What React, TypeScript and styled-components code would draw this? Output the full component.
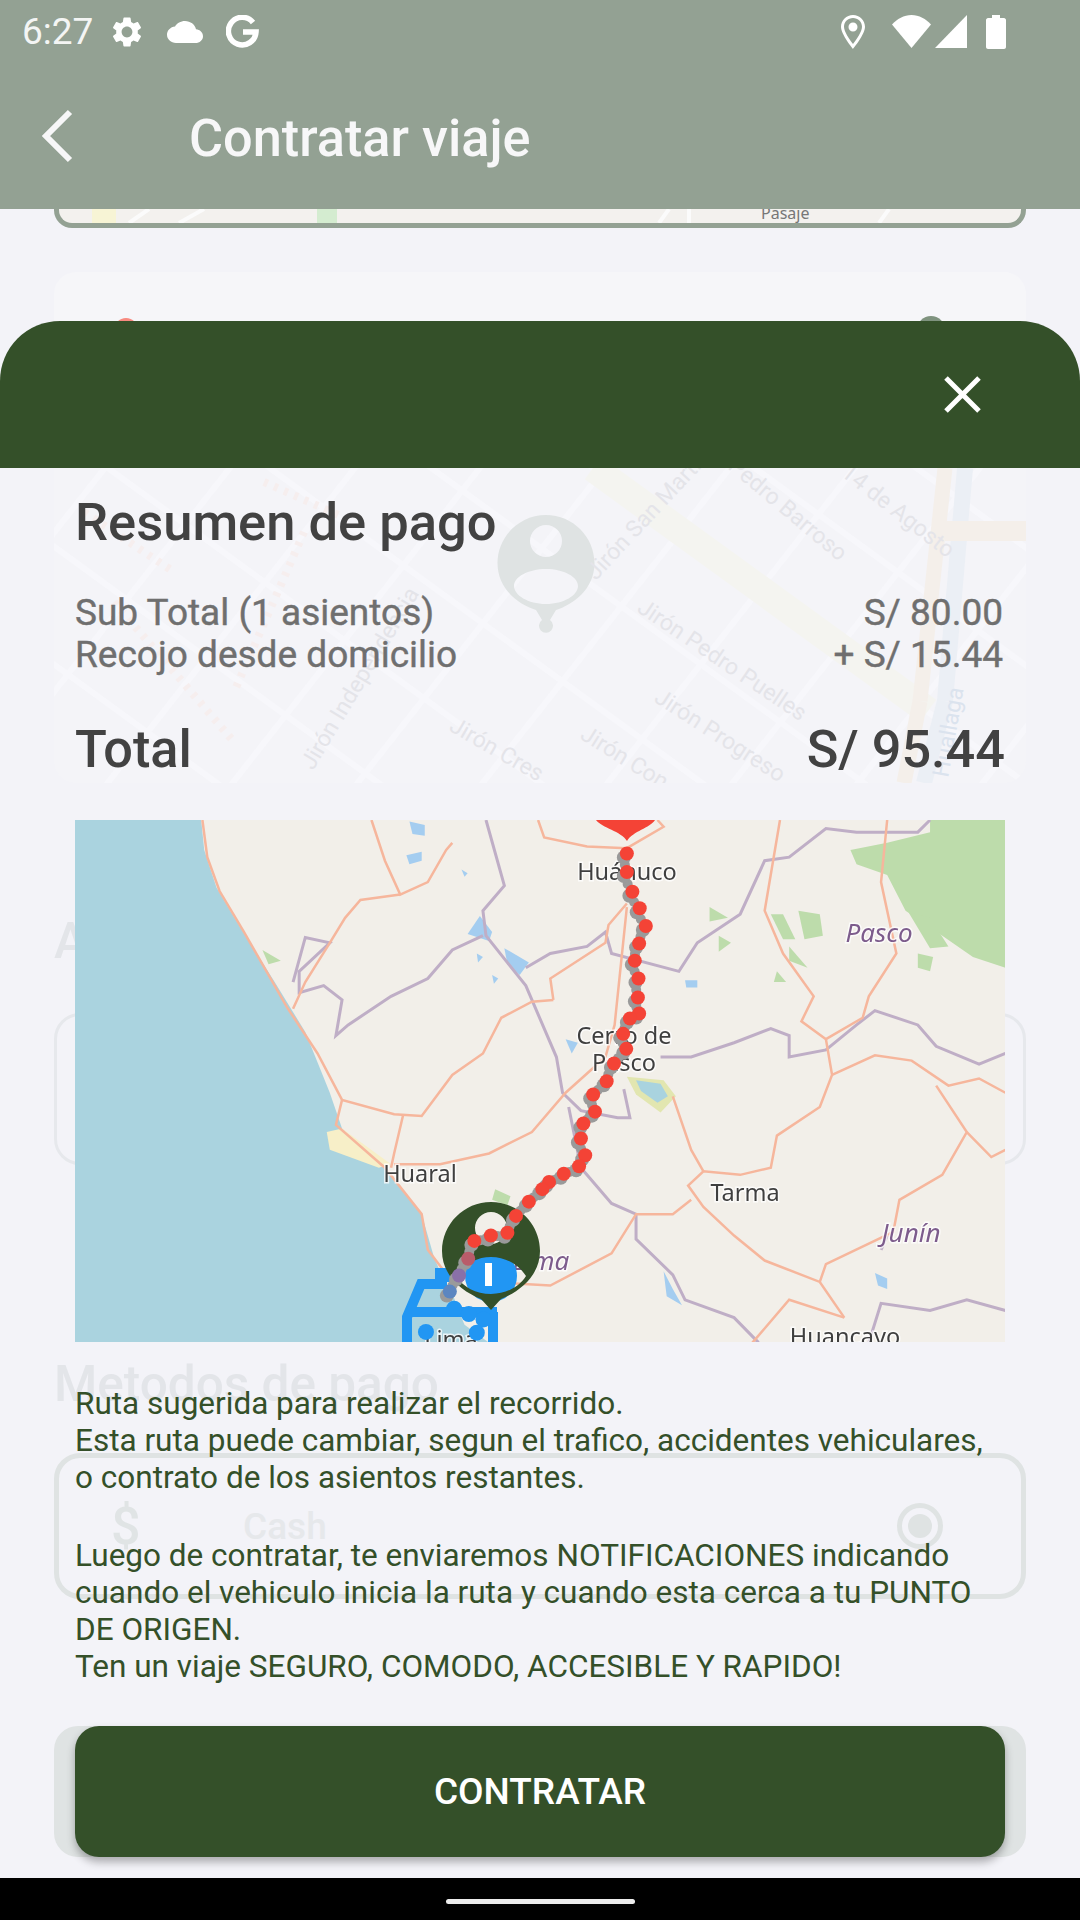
import React from "react";
import styled, { createGlobalStyle } from "styled-components";

const Global = createGlobalStyle`
  html, body { margin: 0; padding: 0; background: #f3f3f8; }
  * { box-sizing: border-box; }
  body { font-family: Roboto, "Liberation Sans", sans-serif; }
`;

const Screen = styled.div`
  position: relative;
  width: 1080px;
  height: 1920px;
  overflow: hidden;
  display: flex;
  flex-direction: column;
  background: #f3f3f8;
`;

const Header = styled.header`
  flex: 0 0 209px;
  background: #93a193;
  display: flex;
  flex-direction: column;
  color: #f7f7f8;
`;

const StatusBar = styled.div`
  height: 63px;
  display: flex;
  align-items: center;
  justify-content: space-between;
  padding: 0 74px 0 22px;
`;

const StatusGroup = styled.div`
  display: flex;
  align-items: center;
`;

const Clock = styled.span`
  font-size: 37px;
  font-weight: 400;
  line-height: 43px;
  width: 87px;
  color: #f4f5f4;
`;

const StatusIcon = styled.svg<{ $gap?: number }>`
  display: block;
  flex: none;
  margin-left: ${(p) => p.$gap ?? 0}px;
  fill: #fff;
`;

const Toolbar = styled.div`
  flex: 1;
  display: flex;
  align-items: center;
  padding: 0 0 0 41px;
`;

const BackIcon = styled.svg`
  flex: none;
  stroke: #f7f7f8;
  fill: none;
  stroke-width: 6;
`;

const Title = styled.h1`
  margin: 6px 0 0 116px;
  font-size: 52.25px;
  line-height: 60px;
  font-weight: 500;
  color: #f7f7f8;
`;

const Backdrop = styled.div`
  flex: 1;
  display: flex;
  flex-direction: column;
  padding: 0 54px;
`;

const MapCardTail = styled.div`
  height: 19px;
  border: 5px solid #93a193;
  border-top: 0;
  border-radius: 0 0 18px 18px;
  background: #f3f1ee;
  overflow: hidden;
`;

const RouteCard = styled.div`
  margin-top: 44px;
  height: 511px;
  border-radius: 22px;
  overflow: hidden;
  background: #f4f4f8;
`;

const FadedHeading = styled.h2<{ $top: number }>`
  margin: ${(p) => p.$top}px 0 0;
  font-size: 49.5px;
  line-height: 58px;
  font-weight: 500;
  color: #e3e5e9;
`;

const OptionCard = styled.div<{ $top: number; $height: number; $line: number; $color: string }>`
  margin-top: ${(p) => p.$top}px;
  height: ${(p) => p.$height}px;
  border: ${(p) => p.$line}px solid ${(p) => p.$color};
  border-radius: 26px;
  display: flex;
  align-items: center;
  padding: 0 78px 0 52px;
`;

const CashSign = styled.span`
  width: 132px;
  font-size: 52px;
  font-weight: 500;
  color: #e0e4e5;
`;

const CashLabel = styled.span`
  flex: 1;
  font-size: 37px;
  font-weight: 500;
  color: #e6e8eb;
`;

const RadioOuter = styled.span`
  width: 46px;
  height: 46px;
  border-radius: 50%;
  border: 5px solid #dfe3e3;
  display: flex;
  align-items: center;
  justify-content: center;
`;

const RadioDot = styled.span`
  width: 24px;
  height: 24px;
  border-radius: 50%;
  background: #dfe3e3;
`;

const ActionBacking = styled.div`
  margin-top: 127px;
  height: 131px;
  border-radius: 24px;
  background: #dfe3e3;
`;

const NavBar = styled.div`
  flex: 0 0 42px;
  background: #000;
  display: flex;
  align-items: flex-start;
  justify-content: center;
  padding-top: 21px;
`;

const HomePill = styled.span`
  width: 189px;
  height: 5px;
  border-radius: 3px;
  background: #ececec;
`;

const Sheet = styled.section`
  position: absolute;
  left: 0;
  right: 0;
  top: 321px;
  bottom: 42px;
  display: flex;
  flex-direction: column;
`;

const SheetHeader = styled.div`
  flex: 0 0 147px;
  background: #345029;
  border-radius: 60px 60px 0 0;
  display: flex;
  justify-content: flex-end;
  padding: 55px 99px 0 0;
`;

const CloseIcon = styled.svg`
  stroke: #fff;
  stroke-width: 5;
  fill: none;
`;

const SheetBody = styled.div`
  flex: 1;
  padding: 24px 75px 0;
  display: flex;
  flex-direction: column;
`;

const SummaryTitle = styled.h2`
  margin: 0;
  font-size: 52.5px;
  line-height: 60px;
  font-weight: 500;
  color: #424242;
`;

const Rows = styled.div`
  margin-top: 40px;
`;

const Row = styled.div`
  display: flex;
  justify-content: space-between;
  padding-right: 2px;
  font-size: 37px;
  line-height: 42px;
  font-weight: 400;
  color: #6f6f6f;
  -webkit-text-stroke: 0.4px #6f6f6f;
`;

const TotalRow = styled.div`
  margin-top: 44px;
  display: flex;
  justify-content: space-between;
  font-size: 52.25px;
  line-height: 60px;
  font-weight: 500;
  color: #424242;
`;

const RouteMap = styled.svg`
  display: block;
  margin-top: 40px;
  flex: none;
  background: #f2efe9;
`;

const BaseLayer = styled.g`
  filter: blur(0.6px);
`;

const Notes = styled.div`
  margin-top: 43px;
  height: 296px;
  font-size: 31.5px;
  line-height: 37px;
  font-weight: 400;
  color: #345029;
`;

const NoteParagraph = styled.p<{ $top?: number }>`
  margin: ${(p) => p.$top ?? 0}px 0 0;
`;

const ContractButton = styled.button`
  margin-top: 45px;
  height: 131px;
  border: 0;
  border-radius: 24px;
  background: #345029;
  color: #fff;
  font-family: inherit;
  font-size: 37px;
  font-weight: 500;
  box-shadow: 0 5px 8px rgba(0, 0, 0, 0.3);
`;

const MapLabel = styled.text<{ $italic?: boolean }>`
  font-family: "Noto Sans", "Open Sans", sans-serif;
  font-size: ${(p) => (p.$italic ? 26 : 23.5)}px;
  font-style: ${(p) => (p.$italic ? "italic" : "normal")};
  fill: ${(p) => (p.$italic ? "#7d5c8c" : "#3f3f3f")};
  stroke: rgba(255, 255, 255, 0.75);
  stroke-width: 3px;
  paint-order: stroke;
  text-anchor: middle;
`;

const GhostLabel = styled.text<{ $blue?: boolean }>`
  font-family: Roboto, sans-serif;
  font-size: 23px;
  fill: ${(p) => (p.$blue ? "#dbe3ee" : "#e4e4e9")};
`;

const TailLabel = styled.text`
  font-family: "Noto Sans", sans-serif;
  font-size: 16px;
  fill: #777;
`;

const ROADS = [
  "M232 26L240 130 260 225 300 340 370 550 420 680 460 810 545 850 590 855 640 740 690 680 720 580 770 535 805 530",
  "M460 810L450 880 530 1000 590 1130 600 1230 640 1320",
  "M560 850L545 960 540 1000",
  "M545 990L620 990 700 960 770 900 825 790 890 690 905 600 925 270",
  "M925 260L895 320 890 370 800 470 805 530",
  "M508 26L530 140 555 235 600 200 630 110 640 90",
  "M555 235L490 250 465 300 440 370 400 480 380 555",
  "M780 26L790 75 860 100 925 105 985 45 975 26",
  "M1175 26L1150 280 1180 400 1230 520 1210 590 1250 640 1260 740 1240 830 1170 910 1160 1000 1110 1020 1050 1010 1025 1050 1050 1110 1100 1190 1150 1260 1240 1320 1280 1420",
  "M1350 26L1340 200 1365 400 1320 520 1310 580 1250 640",
  "M1260 740L1330 685 1390 700 1450 770 1500 750 1543 790",
  "M1430 770L1480 900 1440 1020 1370 1090 1360 1180 1250 1270 1240 1320",
  "M1480 900L1520 970 1543 950",
  "M1000 800L1030 950 1050 1010",
  "M700 1320L800 1330 900 1240 940 1130 1000 1130 1030 1090",
  "M1280 1420L1190 1370 1130 1490",
];

const BORDERS = [
  "M695 26L725 210 690 280 695 350 760 490 810 690 820 790 850 840 910 860 930 860 920 780",
  "M690 350L640 390 600 470 540 520 470 600 450 630 460 530 430 490 390 510 390 450 440 370 400 355 380 480",
  "M760 440L800 400 860 380 890 340 900 400 1010 450 1040 370 1110 290 1150 140 1190 130 1250 50 1300 60 1400 60 1420 26",
  "M980 690L1030 690 1100 650 1160 610 1190 630 1190 690 1250 670 1300 600 1330 560 1400 600 1430 660 1500 710 1543 680",
  "M830 830L850 1000 900 1100 940 1130 940 1200 1000 1300 1020 1370 1100 1420 1140 1490",
  "M1320 1490L1340 1380 1420 1400 1480 1370 1543 1400",
  "M1340 1230L1350 1190",
];

const GREENS = [
  "M1420 26H1543V440L1490 410 1440 350 1380 280 1350 180 1300 150 1290 110 1350 90 1420 60Z",
  "M1205 280L1240 290 1245 350 1215 360Z",
  "M1385 285L1420 300 1450 380 1420 385Z",
  "M1160 290L1180 290 1200 360 1180 360Z",
  "M1060 270L1090 300 1060 310Z",
  "M1190 380L1220 440 1190 420Z",
  "M1075 350L1095 370 1075 395Z",
  "M1170 450L1185 480 1165 480Z",
  "M1400 400L1425 410 1420 450 1400 440Z",
  "M330 390L360 420 340 430Z",
  "M710 1060L735 1080 730 1105 705 1090Z",
];

const WATERS = [
  "M570 30L595 40 595 70 575 65Z",
  "M565 125L590 115 590 140 570 150Z",
  "M655 165L665 175 660 185Z",
  "M685 295L705 340 700 365 665 345Z",
  "M725 385L765 425 750 460 730 430Z",
  "M680 400L690 410 682 425Z",
  "M705 460L715 470 708 485Z",
  "M1020 475L1040 475 1040 495 1022 495Z",
  "M825 640L845 650 835 680Z",
  "M985 1290L1000 1340 1015 1385 990 1360Z",
  "M1330 1295L1350 1310 1350 1340 1335 1330Z",
];

const zoomX = (z: number) => (z - 24) * 0.6125;
const zoomY = (z: number) => (z - 26) * 0.357;

const RED: [number, number, string?][] = [
  [925, 120], [925, 172], [934, 227], [946, 273], [956, 323], [945, 372], [938, 420], [944, 470],
  [943, 523], [945, 568], [930, 582], [919, 625], [924, 667], [904, 708], [892, 758], [870, 795],
  [873, 843], [854, 876], [850, 918], [857, 965], [847, 996], [822, 1017], [798, 1040], [787, 1060],
  [765, 1095], [744, 1135], [730, 1182], [703, 1190], [676, 1205], [666, 1255, "#b95c6a"],
  [651, 1302, "#8a70a8"], [636, 1347, "#5c86c0"], [643, 1395, "#2196f3"], [667, 1410, "#2196f3"],
  [691, 1425, "#2196f3"], [680, 1462, "#2196f3"], [597, 1460, "#2196f3"],
];

const GREY_COUNT = 32;

function SouthMap() {
  const grey = RED.slice(0, GREY_COUNT);
  return (
    <RouteMap width={930} height={522} viewBox="0 0 930 522">
      <BaseLayer>
        <g transform="scale(.6125 .357) translate(-24 -26)">
          <path fill="#aad3df" d="M24 26H230L235 110 255 215 295 330 350 480 400 620 440 790 460 890 530 1000 590 1130 610 1250 625 1310 640 1350 650 1400 660 1440 700 1490 24 1490Z" />
          <path fill="#f7efc8" d="M435 900L460 890 540 990 520 1000 440 950Z" />
          {GREENS.map((d) => (
            <path key={d} d={d} fill="#bddcab" />
          ))}
          {WATERS.map((d) => (
            <path key={d} d={d} fill="#a4cdf0" />
          ))}
          <path d="M925 745L985 755 1005 800 980 845 940 795Z" fill="#e2e6b0" />
          <path d="M940 755L980 765 992 800 975 818 948 785Z" fill="#a9d3df" />
          {BORDERS.map((d) => (
            <path key={d} d={d} fill="none" stroke="#bfaec6" strokeWidth="3" vectorEffect="non-scaling-stroke" />
          ))}
          {ROADS.map((d) => (
            <path key={d} d={d} fill="none" stroke="#f6b69c" strokeWidth="2.5" vectorEffect="non-scaling-stroke" />
          ))}
        </g>
        <MapLabel x={552} y={60}>Huánuco</MapLabel>
        <MapLabel x={549} y={224}>Cerro de</MapLabel>
        <MapLabel x={549} y={251}>Pasco</MapLabel>
        <MapLabel x={345} y={362}>Huaral</MapLabel>
        <MapLabel x={670} y={381}>Tarma</MapLabel>
        <MapLabel x={770} y={525}>Huancayo</MapLabel>
        <MapLabel x={376} y={528}>Lima</MapLabel>
        <MapLabel x={804} y={122} $italic>Pasco</MapLabel>
        <MapLabel x={836} y={422} $italic>Junín</MapLabel>
        <MapLabel x={466} y={450} $italic>Lima</MapLabel>
      </BaseLayer>

      <path fill="#f44336" d="M521 0H580C575 8 558 11 552 21C546 11 527 8 521 0Z" />

      <g fill="none" stroke="#2196f3" strokeWidth="10">
        <path d="M332 524V497L346 464H372" />
        <path d="M332 492H422" />
        <path d="M418 524V492" />
      </g>
      <path fill="#2196f3" d="M360 448H375V462H360Z" />
      <circle cx={416} cy={456} r={26} fill="#2196f3" />
      <path fill="#fff" d="M410 443H417V466H410Z" />
      <path
        fillRule="evenodd"
        fill="#345029"
        d="M416 382C443 382 465 404 465 431C465 456 444 472 426 479L416 490L406 479C388 472 367 456 367 431C367 404 389 382 416 382ZM416 392A16 16 0 1 0 416 424A16 16 0 1 0 416 392ZM416 437C401 437 388 445 381 456C388 467 401 474 416 474C431 474 444 467 451 456C444 445 431 437 416 437Z"
      />
      {grey.slice(1).map(([x, y], i) => (
        <circle
          key={`mid-${x}-${y}`}
          cx={(zoomX(x) + zoomX(grey[i][0])) / 2 - 2}
          cy={(zoomY(y) + zoomY(grey[i][1])) / 2 + 2}
          r={5}
          fill="#9a9a9a"
        />
      ))}
      {grey.map(([x, y]) => (
        <circle key={`grey-${x}-${y}`} cx={zoomX(x) - 3} cy={zoomY(y) + 4} r={7} fill="#9a9a9a" />
      ))}
      {RED.map(([x, y, color]) => (
        <circle key={`dot-${x}-${y}`} cx={zoomX(x)} cy={zoomY(y)} r={color === "#2196f3" ? 8 : 7} fill={color ?? "#f44336"} />
      ))}
    </RouteMap>
  );
}

const ALONG = [-5, -4, -3, -2, -1, 0, 1, 2, 3, 4, 5, 6, 7].map((k) => [539 - k * 56, 196 + k * 77]);
const ACROSS = [-2, -1, 0, 1, 2, 3, 4, 5, 6, 7, 8, 9].map((k) => [k * 125, 420]);

function GhostMap() {
  return (
    <svg width={972} height={511} viewBox="0 0 972 511" style={{ display: "block" }}>
      {ALONG.map(([x, y]) => (
        <line key={`a-${x}`} x1={x - 810} y1={y - 590} x2={x + 810} y2={y + 590} stroke="#f7f7fb" strokeWidth={6} />
      ))}
      {ACROSS.map(([x, y]) => (
        <line key={`b-${x}`} x1={x - 620} y1={y + 790} x2={x + 620} y2={y - 790} stroke="#f7f7fb" strokeWidth={6} />
      ))}
      <path d="M539 196L874 439" stroke="#f4f4f0" strokeWidth={28} />
      <path d="M891 196L866 429" stroke="#f4efea" strokeWidth={15} />
      <path d="M911 196L891 429" stroke="#ebeff5" strokeWidth={16} />
      <path d="M891 259H972" stroke="#f4efea" strokeWidth={20} />
      <path d="M866 429L850 511" stroke="#f4efea" strokeWidth={15} />
      <path d="M891 429L870 511" stroke="#ebeff5" strokeWidth={16} />
      <path d="M30 240L120 300M60 330L180 470M210 210L300 250M250 260L180 420" stroke="#f6eeee" strokeWidth={8} strokeDasharray="4 7" fill="none" />
      <rect x={0} y={0} width={972} height={49} fill="#f6f6f9" />
      <circle cx={72} cy={58} r={12} fill="#f88a80" />
      <circle cx={877} cy={58} r={14} fill="#7f937f" />
      <path
        fillRule="evenodd"
        fill="#dfe3e3"
        d="M492 243C519 243 540.5 265 540.5 291C540.5 318 518 333 502 338L496 348A7 7 0 1 1 488 348L482 338C466 333 443.5 318 443.5 291C443.5 265 465 243 492 243ZM492 253A16 16 0 1 0 492 285A16 16 0 1 0 492 253ZM492 297C474 297 460 305 460 314C460 323 474 332 492 332C510 332 524 323 524 314C524 305 510 297 492 297Z"
      />
      <GhostLabel transform="translate(542 309) rotate(-47)">Jirón San Martín</GhostLabel>
      <GhostLabel transform="translate(673 196) rotate(40)">Pedro Barroso</GhostLabel>
      <GhostLabel transform="translate(786 203) rotate(38)">14 de Agosto</GhostLabel>
      <GhostLabel transform="translate(582 339) rotate(34)">Jirón Pedro Puelles</GhostLabel>
      <GhostLabel transform="translate(599 429) rotate(33)">Jirón Progreso</GhostLabel>
      <GhostLabel transform="translate(525 466) rotate(32)">Jirón Con</GhostLabel>
      <GhostLabel transform="translate(394 458) rotate(30)">Jirón Cres</GhostLabel>
      <GhostLabel transform="translate(259 499) rotate(-59)">Jirón Independencia</GhostLabel>
      <GhostLabel $blue transform="translate(894 506) rotate(-80)">Huallaga</GhostLabel>
    </svg>
  );
}

function TailMap() {
  return (
    <svg width={962} height={14} viewBox="0 0 962 14" style={{ display: "block" }}>
      <rect x={33} y={0} width={24} height={14} fill="#f7f4d5" />
      <path d="M70 14L90 0M120 14L145 0M600 14L610 0M630 14V0M820 14L830 0" stroke="#fbfbfb" strokeWidth={4} />
      <rect x={258} y={0} width={20} height={14} fill="#d4ecd0" />
      <TailLabel x={702} y={10}>Pasaje</TailLabel>
    </svg>
  );
}

export default function App() {
  return (
    <Screen>
      <Global />
      <Header>
        <StatusBar>
          <StatusGroup>
            <Clock>6:27</Clock>
            <StatusIcon width={36} height={36} viewBox="0 0 24 24">
              <path d="M19.14 12.94c.04-.3.06-.61.06-.94 0-.32-.02-.64-.07-.94l2.03-1.58c.18-.14.23-.41.12-.61l-1.92-3.32c-.12-.22-.37-.29-.59-.22l-2.39.96c-.5-.38-1.03-.7-1.62-.94l-.36-2.54c-.04-.24-.24-.41-.48-.41h-3.84c-.24 0-.43.17-.47.41l-.36 2.54c-.59.24-1.13.57-1.62.94l-2.39-.96c-.22-.08-.47 0-.59.22L2.74 8.87c-.12.21-.08.47.12.61l2.03 1.58c-.05.3-.09.63-.09.94s.02.64.07.94l-2.03 1.58c-.18.14-.23.41-.12.61l1.92 3.32c.12.22.37.29.59.22l2.39-.96c.5.38 1.03.7 1.62.94l.36 2.54c.05.24.24.41.48.41h3.84c.24 0 .44-.17.47-.41l.36-2.54c.59-.24 1.13-.56 1.62-.94l2.39.96c.22.08.47 0 .59-.22l1.92-3.32c.12-.22.07-.47-.12-.61l-2.01-1.58zM12 15.6c-1.98 0-3.6-1.62-3.6-3.6s1.62-3.6 3.6-3.6 3.6 1.62 3.6 3.6-1.62 3.6-3.6 3.6z" />
            </StatusIcon>
            <StatusIcon $gap={22} width={36} height={22} viewBox="0 4 24 16" preserveAspectRatio="none">
              <path d="M19.35 10.04C18.67 6.59 15.64 4 12 4 9.11 4 6.6 5.64 5.35 8.04 2.34 8.36 0 10.91 0 14c0 3.31 2.69 6 6 6h13c2.76 0 5-2.24 5-5 0-2.64-2.05-4.78-4.65-4.96z" />
            </StatusIcon>
            <StatusIcon $gap={23} width={33} height={33} viewBox="0 0 33 33">
              <path d="M27 7.5A13.8 13.8 0 1 0 30 17H17" fill="none" stroke="#fff" strokeWidth={5.5} />
            </StatusIcon>
          </StatusGroup>
          <StatusGroup>
            <StatusIcon width={24} height={34} viewBox="0 0 24 34">
              <path
                fillRule="evenodd"
                d="M12 0C5.4 0 0 5.2 0 11.8 0 19.5 12 34 12 34S24 19.5 24 11.8C24 5.2 18.6 0 12 0ZM12 3C17 3 21 6.9 21 11.8 21 16.6 15.3 25 12 29 8.7 25 3 16.6 3 11.8 3 6.9 7 3 12 3ZM12 7.5A4.5 4.5 0 1 0 12 16.5 4.5 4.5 0 1 0 12 7.5Z"
              />
            </StatusIcon>
            <StatusIcon $gap={27} width={39} height={33} viewBox="0 0 39 33">
              <path d="M19.5 33L0 9.5C5 4 12 0 19.5 0S34 4 39 9.5Z" />
            </StatusIcon>
            <StatusIcon $gap={4} width={32} height={33} viewBox="0 0 32 33">
              <path d="M32 0V33H0Z" />
            </StatusIcon>
            <StatusIcon $gap={19} width={20} height={34} viewBox="0 0 20 34">
              <path d="M6 0H14V3H18C19 3 20 4 20 5V32C20 33 19 34 18 34H2C1 34 0 33 0 32V5C0 4 1 3 2 3H6Z" />
            </StatusIcon>
          </StatusGroup>
        </StatusBar>
        <Toolbar>
          <BackIcon width={32} height={54} viewBox="0 0 32 54">
            <path d="M29 3L5 27 29 51" />
          </BackIcon>
          <Title>Contratar viaje</Title>
        </Toolbar>
      </Header>

      <Backdrop>
        <MapCardTail>
          <TailMap />
        </MapCardTail>
        <RouteCard>
          <GhostMap />
        </RouteCard>
        <FadedHeading $top={129}>Asientos</FadedHeading>
        <OptionCard $top={43} $height={152} $line={3} $color="#e6e8ec" />
        <FadedHeading $top={190}>Metodos de pago</FadedHeading>
        <OptionCard $top={40} $height={146} $line={5} $color="#dfe3e3">
          <CashSign>$</CashSign>
          <CashLabel>Cash</CashLabel>
          <RadioOuter>
            <RadioDot />
          </RadioOuter>
        </OptionCard>
        <ActionBacking />
      </Backdrop>

      <NavBar>
        <HomePill />
      </NavBar>

      <Sheet>
        <SheetHeader>
          <CloseIcon width={37} height={37} viewBox="0 0 37 37">
            <path d="M2 2L35 35M35 2L2 35" />
          </CloseIcon>
        </SheetHeader>
        <SheetBody>
          <SummaryTitle>Resumen de pago</SummaryTitle>
          <Rows>
            <Row>
              <span>Sub Total (1 asientos)</span>
              <span>S/ 80.00</span>
            </Row>
            <Row>
              <span>Recojo desde domicilio</span>
              <span>+ S/ 15.44</span>
            </Row>
          </Rows>
          <TotalRow>
            <span>Total</span>
            <span>S/ 95.44</span>
          </TotalRow>
          <SouthMap />
          <Notes>
            <NoteParagraph>
              Ruta sugerida para realizar el recorrido.
              <br />
              Esta ruta puede cambiar, segun el trafico, accidentes vehiculares, o contrato de los asientos restantes.
            </NoteParagraph>
            <NoteParagraph $top={41}>
              Luego de contratar, te enviaremos NOTIFICACIONES indicando cuando el vehiculo inicia la ruta y cuando esta cerca a tu PUNTO DE ORIGEN.
              <br />
              Ten un viaje SEGURO, COMODO, ACCESIBLE Y RAPIDO!
            </NoteParagraph>
          </Notes>
          <ContractButton>CONTRATAR</ContractButton>
        </SheetBody>
      </Sheet>
    </Screen>
  );
}
